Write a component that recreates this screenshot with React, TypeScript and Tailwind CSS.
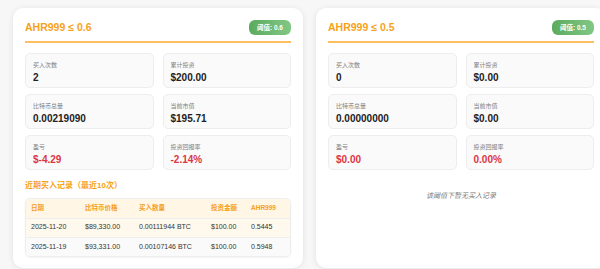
const FONT = { fontFamily: '"Liberation Sans", "Noto Sans CJK SC", sans-serif' }

type Stat = { label: string; value: string; red?: boolean }
type Row = { date: string; price: string; qty: string; amount: string; ahr: string }

const CARDS: { threshold: string; stats: Stat[]; rows: Row[] }[] = [
  {
    threshold: '0.6',
    stats: [
      { label: '买入次数', value: '2' },
      { label: '累计投资', value: '$200.00' },
      { label: '比特币总量', value: '0.00219090' },
      { label: '当前市值', value: '$195.71' },
      { label: '盈亏', value: '$-4.29', red: true },
      { label: '投资回报率', value: '-2.14%', red: true },
    ],
    rows: [
      { date: '2025-11-20', price: '$89,330.00', qty: '0.00111944 BTC', amount: '$100.00', ahr: '0.5445' },
      { date: '2025-11-19', price: '$93,331.00', qty: '0.00107146 BTC', amount: '$100.00', ahr: '0.5948' },
    ],
  },
  {
    threshold: '0.5',
    stats: [
      { label: '买入次数', value: '0' },
      { label: '累计投资', value: '$0.00' },
      { label: '比特币总量', value: '0.00000000' },
      { label: '当前市值', value: '$0.00' },
      { label: '盈亏', value: '$0.00', red: true },
      { label: '投资回报率', value: '0.00%', red: true },
    ],
    rows: [],
  },
]

function StatBox({ s }: { s: Stat }) {
  return (
    <div className="h-[35px] rounded-[5px] border border-[#ededed] bg-[#fafafa] px-[7px] pt-[7px]">
      <div className="text-[6px] leading-[9px] text-[#808080]">{s.label}</div>
      <div className={['text-[10px] font-bold leading-[13px] mt-[1px]', s.red ? 'text-[#dc3545]' : 'text-[#222]'].join(' ')}>{s.value}</div>
    </div>
  )
}

function Card({ threshold, stats, rows }: { threshold: string; stats: Stat[]; rows: Row[] }) {
  return (
    <div className="flex flex-col rounded-[10px] bg-white px-[12px] pt-[11px] pb-[11px] shadow-[0_1px_6px_rgba(0,0,0,0.09)]">
      <div className="flex items-center justify-between border-b-2 border-[#ffbf5e] pb-[6px]">
        <div className="text-[10.5px] font-bold leading-[16px] text-[#f7a21b]">AHR999 ≤ {threshold}</div>
        <div className="rounded-[6px] bg-gradient-to-r from-[#5aab5e] to-[#82c785] px-[8px] text-[6.5px] font-bold leading-[15px] text-white">
          阈值: {threshold}
        </div>
      </div>
      <div className="mt-[10px] grid grid-cols-2 gap-x-[9px] gap-y-[6px]">
        {stats.map((s) => <StatBox key={s.label} s={s} />)}
      </div>
      {rows.length > 0 ? (
        <>
          <div className="mt-[10px] text-[8px] font-bold leading-[12px] text-[#f7a21b]">近期买入记录（最近10次）</div>
          <div className="mt-[6px] overflow-hidden rounded-[5px] border border-[#eeeeee] shadow-[0_1px_2px_rgba(0,0,0,0.05)]">
            <table className="w-full table-fixed border-collapse text-left">
              <colgroup>
                <col className="w-[59px]" />
                <col className="w-[54px]" />
                <col className="w-[72px]" />
                <col className="w-[40px]" />
                <col />
              </colgroup>
              <thead>
                <tr className="h-[19px] bg-[#fff6e5] text-[6.5px] font-bold text-[#f5a020]">
                  <th className="pl-[5px]">日期</th>
                  <th>比特币价格</th>
                  <th>买入数量</th>
                  <th>投资金额</th>
                  <th>AHR999</th>
                </tr>
              </thead>
              <tbody>
                {rows.map((r, i) => (
                  <tr key={r.date} className={['h-[19px] border-t border-[#eeeeee] text-[7px] text-[#333]', i === 0 ? 'bg-[#fff8ec]' : 'bg-[#fafafa]'].join(' ')}>
                    <td className="pl-[5px]">{r.date}</td>
                    <td>{r.price}</td>
                    <td className="whitespace-nowrap">{r.qty}</td>
                    <td>{r.amount}</td>
                    <td>{r.ahr}</td>
                  </tr>
                ))}
              </tbody>
            </table>
          </div>
        </>
      ) : (
        <div className="mt-[21px] text-center text-[7px] italic leading-[10px] text-[#777]">该阈值下暂无买入记录</div>
      )}
    </div>
  )
}

export default function App() {
  return (
    <div className="h-[269px] w-[600px] overflow-hidden bg-[#f7f7f7]" style={FONT}>
      <div className="grid w-[620px] grid-cols-[290px_290px] gap-x-[13px] pl-[13px] pt-[8px]">
        {CARDS.map((c) => <Card key={c.threshold} {...c} />)}
      </div>
    </div>
  )
}
